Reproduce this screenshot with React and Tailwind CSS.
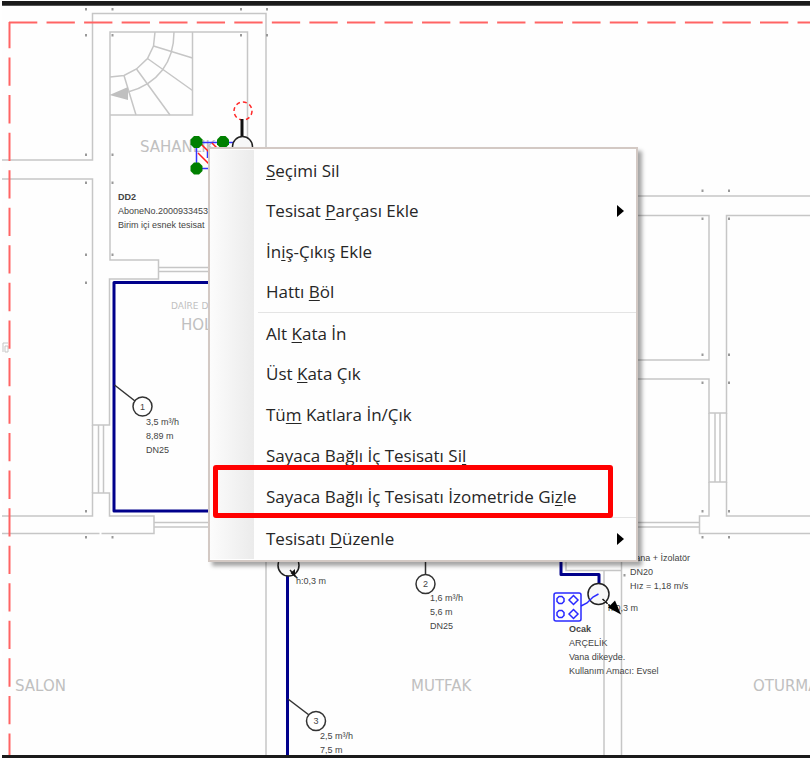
const WALLS = [
  "M2 160H92.5V13.5H266V760",
  "M247.500 140V32H110V260H158.500V279H109.500V425H92.500V179H2",
  "M92.500 425V493M98.500 425V493M103.500 425V493",
  "M2 516H92.500V493H109.500V516H154V533.500H101.500M2 533.500H99.500",
  "M154 522.500H260M154 527H260M158.500 267.500H260M158.500 271.500H260",
  "M600 196H2400M600 215.500H709V360H600M600 379H709V413H726.500V215.500H2400",
  "M709 413V482H726.500V413M715 413V482M720 413V482",
  "M709 482V516H699.500V533.500H2400M726.500 482V516H2400",
  "M600 522.500H699.500M600 527H699.500",
  "M566 555V570.500H621M604 571V2400M621.500 555V2400",
  "M192.500 32V115H110",
];

const STAIRS = [
  "M174 32C174 62 158 84 128 92",
  "M155 32L153.500 46L147.500 58.500L136.500 69L124 75.500L110 77",
  "M153.500 46L192.500 58M147.500 58.500L192.500 90.500M136.500 69L170 115M124 75.500L136 115",
];

const DOTS = [
  [86, 9], [112.5, 9], [241, 9], [267, 9],
  [86, 35], [112.5, 35], [241, 35], [267, 35],
  [86, 154.5], [112.5, 154.5], [86, 182.5], [112.5, 182.5],
  [86, 254.5], [112.5, 254.5], [86, 282.5], [86, 511],
  [86, 537], [112.5, 537],
  [702.5, 190.5], [729, 190.5], [702.5, 218.5], [729, 218.5],
  [702.5, 354.5], [729, 354.5], [702.5, 382.5], [729, 382.5],
  [702.5, 511], [729, 511], [702.5, 537], [729, 537], [624.5, 575],
];

const ROOMS = [
  { x: 140, y: 152, text: "SAHANLIK" },
  { x: 181, y: 330, text: "HOL" },
  { x: 15, y: 691, text: "SALON" },
  { x: 411, y: 691, text: "MUTFAK" },
  { x: 753, y: 691, text: "OTURMA" },
];

const NOTES = [
  { x: 118, y: 200, lines: ["DD2", "AboneNo.2000933453", "Birim içi esnek tesisat"], title: true },
  { x: 146, y: 425, lines: ["3,5 m³/h", "8,89 m", "DN25"] },
  { x: 296, y: 584, lines: ["h:0,3 m"] },
  { x: 430, y: 601, lines: ["1,6 m³/h", "5,6 m", "DN25"] },
  { x: 320, y: 739, lines: ["2,5 m³/h", "7,5 m"] },
  { x: 630, y: 561, lines: ["Vana + İzolatör", "DN20", "Hız = 1,18 m/s"] },
  { x: 608, y: 611, lines: ["h:0,3 m"] },
  { x: 569, y: 632, lines: ["Ocak", "ARÇELİK", "Vana dikeyde.", "Kullanım Amacı: Evsel"], title: true },
];

const NODES = [
  { x: 142.5, y: 406.5, label: "1", leader: "M114.500 385L135 401" },
  { x: 425.5, y: 584, label: "2", leader: "M425.500 555V575" },
  { x: 316, y: 721, label: "3", leader: "M288 699L309 715" },
];

function Octagon({ x, y, r, ...rest }) {
  const k = r * 0.42;
  const points = [[-k, -r], [k, -r], [r, -k], [r, k], [k, r], [-k, r], [-r, k], [-r, -k]]
    .map(([dx, dy]) => `${x + dx},${y + dy}`)
    .join(" ");
  return <polygon points={points} {...rest} />;
}

function FloorPlan() {
  return (
    <svg className="absolute inset-0 h-full w-full" role="img" aria-label="Kat planı">
      <g transform="translate(-2 -6)" fill="none">
        <g stroke="#c6c6c6" strokeWidth="1.500">
          {WALLS.map((d) => <path key={d} d={d} />)}
          {STAIRS.map((d) => <path key={d} d={d} />)}
          <path d="M3 343V352M5 352H8V346H5V352M3 343H8" strokeWidth="1" />
        </g>
        <path d="M109.500 95L128 87V100Z" fill="#c0c0c0" />
        {DOTS.map(([x, y]) => (
          <rect key={`${x}-${y}`} x={x - 1} y={y - 1} width="2" height="2.500" fill="#999" />
        ))}
        <g stroke="#ff6464" strokeWidth="2" strokeDasharray="28.300 9.250">
          <path d="M9 22.500H2400" />
          <path d="M9.500 22V2400" strokeDashoffset="2" />
        </g>

        <g fill="#c0c0c0" className="font-['DejaVu_Sans',sans-serif] text-[15px]">
          {ROOMS.map((r) => <text key={r.text} x={r.x} y={r.y}>{r.text}</text>)}
          <text x="171" y="309" className="text-[9px]">DAİRE D1</text>
        </g>

        <path d="M260 282.500H114V511H260" stroke="#00008b" strokeWidth="3" strokeLinejoin="round" />
        <path d="M287.500 575V2400" stroke="#00008b" strokeWidth="3" />
        <path d="M561 555V574.500H599V584" stroke="#00008b" strokeWidth="3" strokeLinejoin="round" />

        <g stroke="#3434ff" strokeWidth="1.500">
          <path d="M196.500 142.500H238M196.500 142.500V168.500H223M207.500 151V158" />
          <path d="M201 144L211 154M198 153L210 165M212 143L219 150" stroke="#ff2020" />
        </g>
        <Octagon x={196.5} y={142} r={6} fill="#008000" />
        <Octagon x={223} y={142} r={6} fill="#008000" />
        <Octagon x={196.5} y={168.5} r={6} fill="#008000" />
        <circle cx="243" cy="111" r="9" stroke="#ff2828" strokeWidth="1.500" strokeDasharray="4 3" />
        <path d="M242 119V137" stroke="#111" strokeWidth="3" />

        <g stroke="#222" strokeWidth="1.500" fill="#f7f7f7">
          <circle cx="242.500" cy="146.500" r="10" />
          <circle cx="288.500" cy="565.500" r="10.500" />
          <circle cx="598.500" cy="594" r="10.500" />
          <path d="M290 570L297 578" />
        </g>
        <path d="M290.500 573L295 569V577Z" fill="#111" />

        {NODES.map((n) => (
          <g key={n.label}>
            <path d={n.leader} stroke="#333" strokeWidth="1.500" />
            <circle cx={n.x} cy={n.y} r="9.500" fill="#fff" stroke="#333" strokeWidth="1.500" />
            <text x={n.x} y={n.y + 3} textAnchor="middle" fill="#444" className="font-['Liberation_Sans',sans-serif] text-[9px]">
              {n.label}
            </text>
          </g>
        ))}

        <g stroke="#2a2aff" strokeWidth="1.500">
          <rect x="554" y="593" width="27" height="28" rx="2" />
          <path d="M581 606L587 603L593 597L598.500 594" />
          <Octagon x={560.5} y={600} r={3.5} />
          <Octagon x={560.5} y={614} r={3.5} />
          <path d="M569 600L573.500 595.500L578 600L573.500 604.500ZM569 614L573.500 609.500L578 614L573.500 618.500Z" />
        </g>

        <g fill="#444" className="font-['Liberation_Sans',sans-serif] text-[9px]">
          {NOTES.map((n) =>
            n.lines.map((line, i) => (
              <text
                key={`${n.x}-${n.y}-${line}`}
                x={n.x}
                y={n.y + i * 14}
                className={n.title && i === 0 ? "font-bold" : ""}
              >
                {line}
              </text>
            )),
          )}
        </g>
        <path d="M602.500 599L610 606" stroke="#111" strokeWidth="1.500" strokeDasharray="3 1" />
        <path d="M608 607.500L615 600.500L621 614.500Z" fill="#000" />
      </g>
    </svg>
  );
}

const MENU = [
  {
    height: "h-[162px]",
    items: [
      { text: ["", "S", "eçimi Sil"] },
      { text: ["Tesisat ", "P", "arçası Ekle"], submenu: true },
      { text: ["İn", "i", "ş-Çıkış Ekle"] },
      { text: ["Hattı ", "B", "öl"] },
    ],
  },
  {
    height: "h-[204px]",
    items: [
      { text: ["Alt ", "K", "ata İn"] },
      { text: ["Üst ", "K", "ata Çık"] },
      { text: ["Tü", "m", " Katlara İn/Çık"] },
      { text: ["Sayaca Bağlı İç Tesisatı Si", "l", ""] },
      { text: ["Sayaca Bağlı İç Tesisatı İzometride Gi", "z", "le"], marked: true },
    ],
  },
  {
    height: "h-[41px]",
    items: [{ text: ["Tesisatı ", "D", "üzenle"], submenu: true }],
  },
];

function MenuItem({ text, submenu, marked }) {
  const [before, key, after] = text;
  return (
    <li className="relative flex" role="none">
      <button
        type="button"
        role="menuitem"
        aria-haspopup={submenu ? "menu" : undefined}
        className="flex w-full items-center justify-between pl-14 pr-3 text-left whitespace-nowrap"
      >
        <span>
          {before}
          <span className="underline decoration-1 underline-offset-2">{key}</span>
          {after}
        </span>
        {submenu && (
          <svg width="7" height="12" viewBox="0 0 7 12" aria-hidden="true">
            <path d="M0 0L7 6L0 12Z" fill="#000" />
          </svg>
        )}
      </button>
      {marked && (
        <span className="pointer-events-none absolute -top-[11px] -bottom-px left-[3px] right-[23px] rounded-[3px] border-[5px] border-[#ff0000]" />
      )}
    </li>
  );
}

function ContextMenu() {
  return (
    <div
      role="menu"
      aria-label="Tesisat menüsü"
      className="absolute left-[206px] top-[141px] w-[430px] border-2 border-[#d3c9c4] bg-[#fefefe] py-px font-['Open_Sans','Noto_Sans',sans-serif] text-[17px] text-[#262626] shadow-[4px_4px_4px_rgba(0,0,0,0.35)]"
    >
      <div className="bg-[linear-gradient(to_right,#fcfcfc,#ebebeb)] bg-[length:44px_100%] bg-no-repeat">
        {MENU.map((group, i) => (
          <div key={group.height}>
            {i > 0 && <hr className="ml-12 border-t border-[#e4e4e4]" />}
            <ul role="none" className={`grid auto-rows-fr ${group.height}`}>
              {group.items.map((item) => <MenuItem key={item.text.join("")} {...item} />)}
            </ul>
          </div>
        ))}
      </div>
    </div>
  );
}

export default function App() {
  return (
    <div className="flex min-h-screen flex-col bg-white px-0.5 pt-px">
      <header className="h-[5px] border-b border-[#555] bg-[#1b1b1b]" />
      <main className="relative flex-1 overflow-hidden bg-[#fefefe]">
        <FloorPlan />
        <ContextMenu />
      </main>
      <footer className="h-[3px] bg-[#1b1b1b]" />
    </div>
  );
}
